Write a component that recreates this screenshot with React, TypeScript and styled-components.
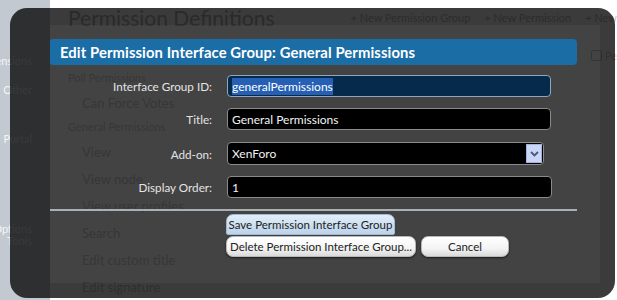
import React from 'react';
import styled, { createGlobalStyle } from 'styled-components';

const GlobalStyle = createGlobalStyle`
  html, body {
    margin: 0;
    padding: 0;
    background: #ffffff;
    overflow: hidden;
  }
  body {
    font-family: Lato, 'Liberation Sans', sans-serif;
  }
`;

const Page = styled.div`
  width: 617px;
  height: 300px;
  display: flex;
  position: relative;
  overflow: hidden;
`;

const Sidebar = styled.div`
  width: 50px;
  flex-shrink: 0;
  background: #c3c9d0;
  display: flex;
  flex-direction: column;
  align-items: flex-end;
  padding-top: 54px;
  gap: 16px;
  overflow: hidden;
`;

const SideItem = styled.div<{ $gap?: number }>`
  color: #f4f6f8;
  font-size: 11px;
  line-height: 13px;
  white-space: nowrap;
  padding-right: 18px;
  margin-top: ${(p) => p.$gap ?? 0}px;
`;

const Main = styled.div`
  flex: 1;
  padding: 4px 0 0 18px;
  display: flex;
  flex-direction: column;
  overflow: hidden;
`;

const HeaderRow = styled.div`
  display: flex;
  align-items: flex-end;
  justify-content: space-between;
`;

const Heading = styled.h1`
  margin: 0;
  font-size: 21px;
  line-height: 28px;
  font-weight: 400;
  color: #b4b4b4;
  white-space: nowrap;
`;

const TopLinks = styled.div`
  display: flex;
  gap: 14px;
  font-size: 11px;
  color: #bdbdbd;
  white-space: nowrap;
  padding-bottom: 8px;
`;

const OptionsRow = styled.div`
  margin-top: 17px;
  height: 12px;
  display: flex;
  justify-content: flex-end;
`;

const CheckBehind = styled.span`
  display: flex;
  align-items: center;
  gap: 3px;
  margin-right: -4px;
  font-size: 11px;
  color: #cfcfcf;
  &::before {
    content: '';
    width: 9px;
    height: 9px;
    border: 1px solid #bbbbbb;
    border-radius: 2px;
  }
`;

const GroupTitle = styled.div<{ $top: number }>`
  margin-top: ${(p) => p.$top}px;
  font-size: 11px;
  line-height: 13px;
  color: #c8c8c8;
`;

const PermItem = styled.div`
  margin-top: 11px;
  padding-left: 14px;
  font-size: 13px;
  line-height: 16px;
  color: #c8c8c8;
`;

/* ---------- overlay ---------- */

const Frame = styled.div`
  position: absolute;
  z-index: 1;
  left: 10px;
  top: 8px;
  width: 605px;
  height: 290px;
  box-sizing: border-box;
  border-radius: 17px;
  background: rgba(0, 0, 0, 0.77);
  padding: 17px 15px 15px 40px;
  display: flex;
`;

const Panel = styled.div`
  flex: 1;
  background: rgba(255, 255, 255, 0.045);
  padding-top: 14px;
  display: flex;
  flex-direction: column;
`;

const TitleBar = styled.h2`
  margin: 0 23px 0 0;
  height: 26px;
  box-sizing: border-box;
  padding-left: 10px;
  background: #1b6da6;
  border-radius: 3px 4px 4px 3px;
  color: #ffffff;
  font-size: 14.8px;
  font-weight: 700;
  display: flex;
  align-items: center;
  letter-spacing: 0.1px;
`;

const Form = styled.div`
  margin-top: 10px;
  display: flex;
  flex-direction: column;
  gap: 11px;
`;

const Row = styled.div<{ $top?: number }>`
  display: grid;
  grid-template-columns: 162px 1fr;
  column-gap: 15px;
  align-items: center;
  margin-top: ${(p) => p.$top ?? 0}px;
`;

const Label = styled.label`
  text-align: right;
  color: #e4e4e4;
  font-size: 11.7px;
`;

const Field = styled.div<{ $w: number; $focus?: boolean }>`
  width: ${(p) => p.$w}px;
  height: 22px;
  box-sizing: border-box;
  border: 1px solid ${(p) => (p.$focus ? '#8fa6bf' : '#8a8a8a')};
  border-radius: 4px;
  background: ${(p) => (p.$focus ? '#052a4b' : '#000000')};
  color: #f2f2f2;
  font-size: 12px;
  display: flex;
  align-items: center;
  padding-left: 4px;
`;

const Selected = styled.span`
  background: #2660b4;
  color: #ffffff;
  padding: 1px 0;
`;

const SelectField = styled(Field)`
  height: 23px;
  padding-right: 1px;
  justify-content: space-between;
`;

const DropButton = styled.span`
  width: 16px;
  height: 19px;
  background: #cad6f6;
  border: 1px solid #a3b2dc;
  box-sizing: border-box;
  display: flex;
  align-items: center;
  justify-content: center;
`;

const Divider = styled.hr`
  margin: 11px 23px 0 0;
  border: none;
  border-top: 2px solid #a9b0b4;
  height: 0;
`;

const Buttons = styled.div`
  margin: 3px 0 0 176px;
  display: flex;
  flex-direction: column;
  gap: 1px;
`;

const ButtonRow = styled.div`
  display: flex;
  gap: 5px;
`;

const Button = styled.button<{ $primary?: boolean; $w: number }>`
  width: ${(p) => p.$w}px;
  height: 21px;
  padding: 0;
  border: 1px solid ${(p) => (p.$primary ? '#9eb9d3' : '#b8b8b8')};
  border-radius: ${(p) => (p.$primary ? '7px 7px 2px 2px' : '7px')};
  background: ${(p) =>
    p.$primary
      ? 'linear-gradient(#e2eef9, #bcd3ea)'
      : 'linear-gradient(#ffffff 0%, #f4f4f4 60%, #d9d9d9 100%)'};
  box-shadow: ${(p) => (p.$primary ? 'none' : '0 1px 2px rgba(0,0,0,0.6)')};
  color: #222;
  font-family: Lato, 'Liberation Sans', sans-serif;
  font-size: 11.5px;
  text-align: center;
`;

const Chevron = () => (
  <svg width="9" height="6" viewBox="0 0 9 6">
    <path d="M1 1 L4.5 4.5 L8 1" fill="none" stroke="#4b5683" strokeWidth="1.8" />
  </svg>
);

export default function App() {
  const perms = ['View', 'View node', 'View user profiles', 'Search', 'Edit custom title', 'Edit signature'];
  return (
    <>
      <GlobalStyle />
      <Page>
        <Sidebar>
          <SideItem>Extensions</SideItem>
          <SideItem>Other</SideItem>
          <SideItem $gap={20}>Portal</SideItem>
          <SideItem $gap={61}>Options</SideItem>
          <SideItem $gap={-17}>Tools</SideItem>
        </Sidebar>
        <Main>
          <HeaderRow>
            <Heading>Permission Definitions</Heading>
            <TopLinks>
              <span>+ New Permission Group</span>
              <span>+ New Permission</span>
              <span>+ New</span>
            </TopLinks>
          </HeaderRow>
          <OptionsRow>
            <CheckBehind>Per</CheckBehind>
          </OptionsRow>
          <GroupTitle $top={10}>Poll Permissions</GroupTitle>
          <PermItem>Can Force Votes</PermItem>
          <GroupTitle $top={9}>General Permissions</GroupTitle>
          {perms.map((p) => (
            <PermItem key={p}>{p}</PermItem>
          ))}
        </Main>
        <Frame>
          <Panel>
            <TitleBar>Edit Permission Interface Group: General Permissions</TitleBar>
            <Form>
              <Row>
                <Label>Interface Group ID:</Label>
                <Field $w={324} $focus>
                  <Selected>generalPermissions</Selected>
                </Field>
              </Row>
              <Row>
                <Label>Title:</Label>
                <Field $w={324}>General Permissions</Field>
              </Row>
              <Row $top={1}>
                <Label>Add-on:</Label>
                <SelectField $w={317}>
                  XenForo
                  <DropButton>
                    <Chevron />
                  </DropButton>
                </SelectField>
              </Row>
              <Row>
                <Label>Display Order:</Label>
                <Field $w={325}>1</Field>
              </Row>
            </Form>
            <Divider />
            <Buttons>
              <ButtonRow>
                <Button $primary $w={169}>Save Permission Interface Group</Button>
              </ButtonRow>
              <ButtonRow>
                <Button $w={190}>Delete Permission Interface Group...</Button>
                <Button $w={88}>Cancel</Button>
              </ButtonRow>
            </Buttons>
          </Panel>
        </Frame>
      </Page>
    </>
  );
}
